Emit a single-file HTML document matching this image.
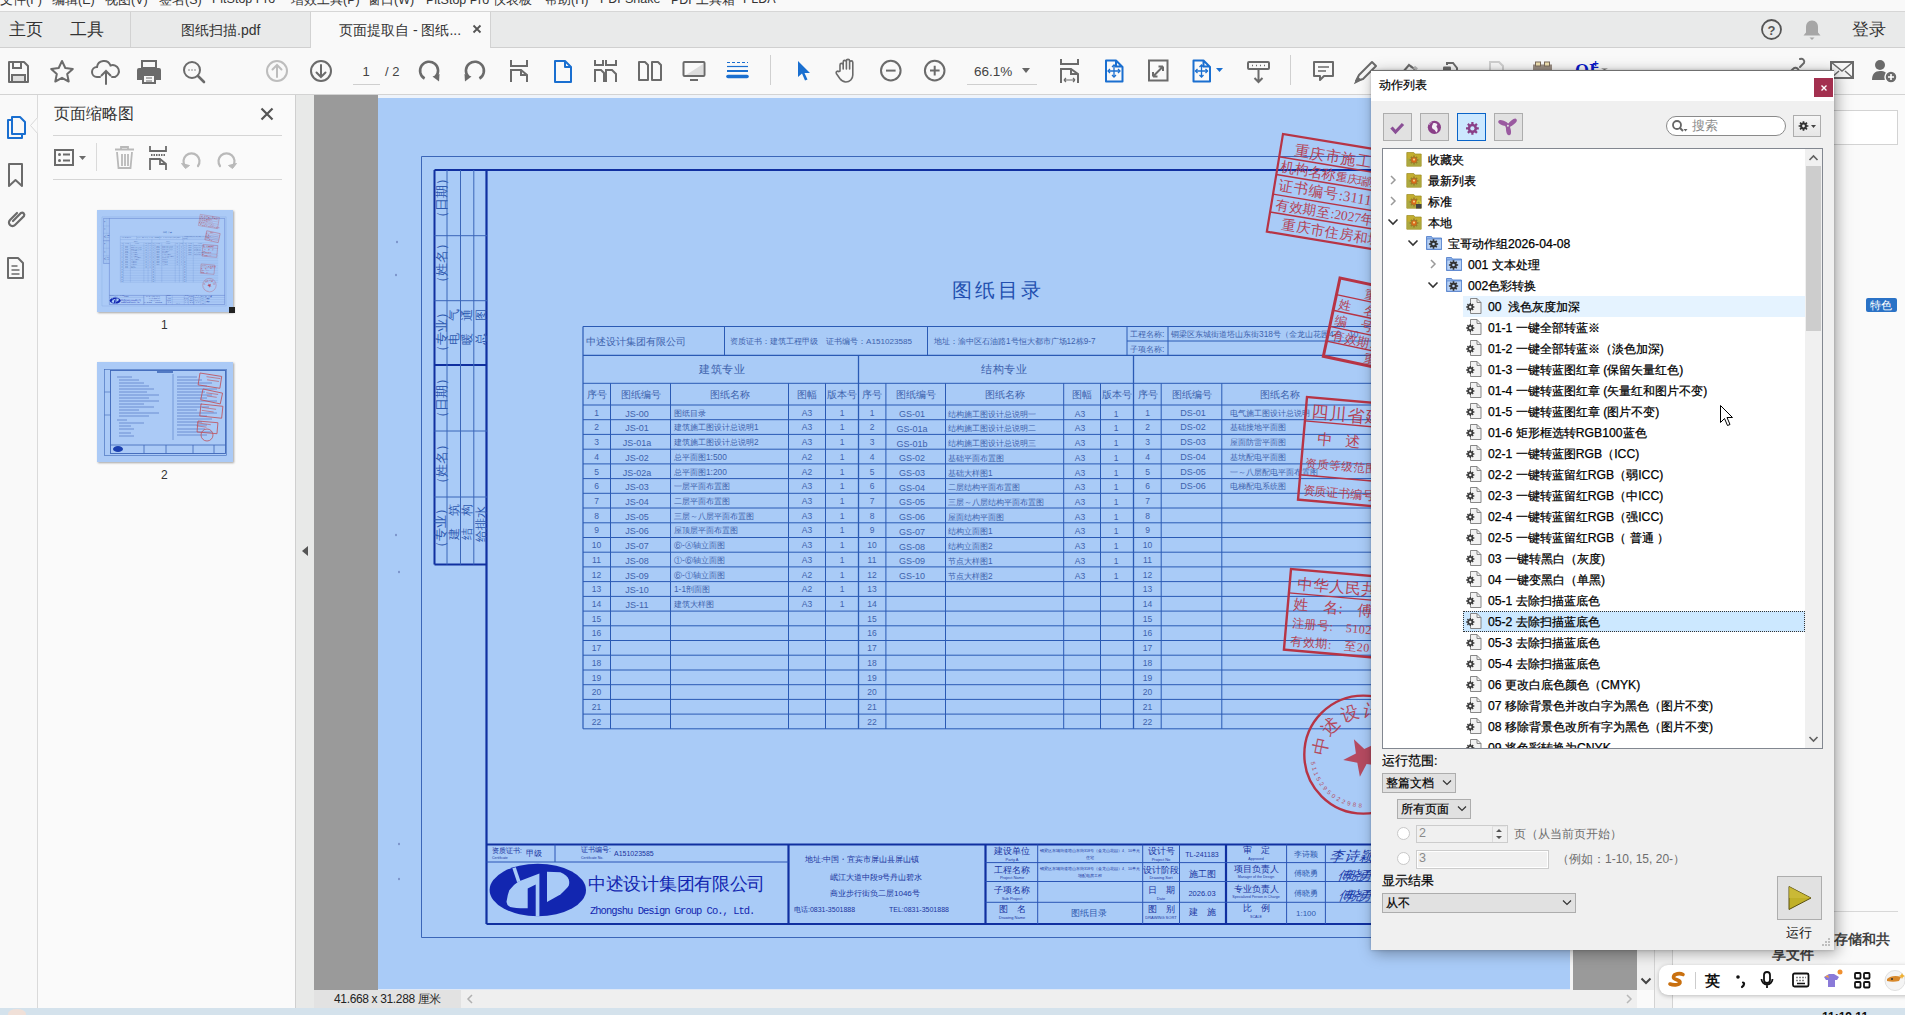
<!DOCTYPE html>
<html><head><meta charset="utf-8">
<style>
*{box-sizing:border-box}
html,body{margin:0;padding:0}
body{width:1905px;height:1015px;overflow:hidden;position:relative;background:#f9f9f9;font-family:"Liberation Sans",sans-serif;color:#222}
.a{position:absolute}
.t{position:absolute;white-space:nowrap}
</style></head><body>

<!-- MENU BAR -->
<div class="a" style="left:0;top:0;width:1905px;height:12px;background:#f9f9f9;border-bottom:1px solid #d6d6d6;overflow:hidden" id="menu"></div>

<!-- TAB BAR -->
<div class="a" style="left:0;top:12px;width:1905px;height:36px;background:#e9eaea;border-bottom:1px solid #d0d0d0" id="tabs"></div>

<!-- TOOLBAR -->
<div class="a" style="left:0;top:48px;width:1905px;height:47px;background:#f9f9f9;border-bottom:1px solid #d3d3d3" id="toolbar"></div>

<!-- LEFT ICON COLUMN -->
<div class="a" style="left:0;top:95px;width:38px;height:913px;background:#f9f9f9;border-right:1px solid #dadada" id="lefticons"></div>

<!-- THUMB PANEL -->
<div class="a" style="left:38px;top:95px;width:258px;height:913px;background:#fafafa;border-right:1px solid #cfcfcf" id="thumbs"></div>

<!-- SPLITTER -->
<div class="a" style="left:296px;top:95px;width:18px;height:913px;background:#e8e9e8" id="splitter"></div>

<!-- DOC AREA -->
<div class="a" style="left:314px;top:95px;width:1323px;height:895px;background:#9a9a9a" id="docarea"></div>

<!-- PAGE -->
<div class="a" style="left:378px;top:95px;width:1192px;height:895px;background:#a9cbf7;overflow:hidden" id="page"><div class="a" style="left:0;top:0;width:1192px;height:2.5px;background:#eef3fa"></div><div class="a" style="left:0;top:894px;width:1192px;height:1px;background:#dfe8f6"></div><div class="a" style="left:-378px;top:-95px;width:1905px;height:1015px"><svg class="a" style="left:0;top:0" width="1905" height="1015" font-family="Liberation Sans"><g id="bpg"><line x1="421.5" y1="156.5" x2="1510" y2="156.5" stroke="#3b66b8" stroke-width="1"/><line x1="1510" y1="156.5" x2="1510" y2="937.5" stroke="#3b66b8" stroke-width="1"/><line x1="421.5" y1="156.5" x2="421.5" y2="937.5" stroke="#3b66b8" stroke-width="1"/><line x1="421.5" y1="937.5" x2="1510" y2="937.5" stroke="#3b66b8" stroke-width="1"/><line x1="486.5" y1="170" x2="1497" y2="170" stroke="#1030a0" stroke-width="2.2"/><line x1="1497" y1="170" x2="1497" y2="924" stroke="#1030a0" stroke-width="2.2"/><line x1="486.5" y1="170" x2="486.5" y2="924" stroke="#1030a0" stroke-width="2.2"/><line x1="486.5" y1="924" x2="1497" y2="924" stroke="#1030a0" stroke-width="2.2"/><line x1="434.5" y1="170" x2="434.5" y2="564.5" stroke="#1030a0" stroke-width="2"/><line x1="434.5" y1="170" x2="487" y2="170" stroke="#1030a0" stroke-width="2"/><line x1="434.5" y1="564.5" x2="487" y2="564.5" stroke="#1030a0" stroke-width="2"/><line x1="434.5" y1="365" x2="487" y2="365" stroke="#1030a0" stroke-width="2"/><line x1="447" y1="170" x2="447" y2="564.5" stroke="#3b66b8" stroke-width="1"/><line x1="460.5" y1="170" x2="460.5" y2="564.5" stroke="#3b66b8" stroke-width="1"/><line x1="473.8" y1="170" x2="473.8" y2="564.5" stroke="#3b66b8" stroke-width="1"/><line x1="434.5" y1="235.7" x2="487" y2="235.7" stroke="#3b66b8" stroke-width="1"/><line x1="434.5" y1="300.7" x2="487" y2="300.7" stroke="#3b66b8" stroke-width="1"/><line x1="434.5" y1="431" x2="487" y2="431" stroke="#3b66b8" stroke-width="1"/><line x1="434.5" y1="497" x2="487" y2="497" stroke="#3b66b8" stroke-width="1"/><text x="441.5" y="198" font-size="12.5" text-anchor="middle" fill="#2f5ab0" transform="rotate(-90 441.5 198)" dominant-baseline="central" font-family="Liberation Serif">（日期）</text><text x="441.5" y="263" font-size="12.5" text-anchor="middle" fill="#2f5ab0" transform="rotate(-90 441.5 263)" dominant-baseline="central" font-family="Liberation Serif">（姓名）</text><text x="441.5" y="332" font-size="12.5" text-anchor="middle" fill="#2f5ab0" transform="rotate(-90 441.5 332)" dominant-baseline="central" font-family="Liberation Serif">（专业）</text><text x="441.5" y="398" font-size="12.5" text-anchor="middle" fill="#2f5ab0" transform="rotate(-90 441.5 398)" dominant-baseline="central" font-family="Liberation Serif">（日期）</text><text x="441.5" y="464" font-size="12.5" text-anchor="middle" fill="#2f5ab0" transform="rotate(-90 441.5 464)" dominant-baseline="central" font-family="Liberation Serif">（姓名）</text><text x="440.5" y="528" font-size="12.5" text-anchor="middle" fill="#2f5ab0" transform="rotate(-90 440.5 528)" dominant-baseline="central" font-family="Liberation Serif">（专业）</text><text x="454" y="327" font-size="11.5" text-anchor="middle" fill="#2f5ab0" transform="rotate(-90 454 327)" dominant-baseline="central" font-family="Liberation Serif">电　气</text><text x="467" y="327" font-size="11.5" text-anchor="middle" fill="#2f5ab0" transform="rotate(-90 467 327)" dominant-baseline="central" font-family="Liberation Serif">暖　通</text><text x="480.5" y="327" font-size="11.5" text-anchor="middle" fill="#2f5ab0" transform="rotate(-90 480.5 327)" dominant-baseline="central" font-family="Liberation Serif">总　图</text><text x="454" y="522" font-size="11.5" text-anchor="middle" fill="#2f5ab0" transform="rotate(-90 454 522)" dominant-baseline="central" font-family="Liberation Serif">建　筑</text><text x="467" y="522" font-size="11.5" text-anchor="middle" fill="#2f5ab0" transform="rotate(-90 467 522)" dominant-baseline="central" font-family="Liberation Serif">结　构</text><text x="480.5" y="524" font-size="11.5" text-anchor="middle" fill="#2f5ab0" transform="rotate(-90 480.5 524)" dominant-baseline="central" font-family="Liberation Serif">给排水</text><text x="998" y="297" font-size="20" text-anchor="middle" fill="#2350b0" letter-spacing="3" font-family="Liberation Serif">图纸目录</text><line x1="583" y1="326.5" x2="1440" y2="326.5" stroke="#2a5ab4" stroke-width="1.2"/><line x1="583" y1="355.3" x2="1440" y2="355.3" stroke="#2a5ab4" stroke-width="1.2"/><line x1="583" y1="383.3" x2="1440" y2="383.3" stroke="#2a5ab4" stroke-width="1"/><line x1="583" y1="405.0" x2="1440" y2="405.0" stroke="#2a5ab4" stroke-width="1.2"/><line x1="583" y1="419.7" x2="1440" y2="419.7" stroke="#2a5ab4" stroke-width="1"/><line x1="583" y1="434.4" x2="1440" y2="434.4" stroke="#2a5ab4" stroke-width="1"/><line x1="583" y1="449.2" x2="1440" y2="449.2" stroke="#2a5ab4" stroke-width="1"/><line x1="583" y1="463.9" x2="1440" y2="463.9" stroke="#2a5ab4" stroke-width="1"/><line x1="583" y1="478.6" x2="1440" y2="478.6" stroke="#2a5ab4" stroke-width="1"/><line x1="583" y1="493.3" x2="1440" y2="493.3" stroke="#2a5ab4" stroke-width="1"/><line x1="583" y1="508.0" x2="1440" y2="508.0" stroke="#2a5ab4" stroke-width="1"/><line x1="583" y1="522.8" x2="1440" y2="522.8" stroke="#2a5ab4" stroke-width="1"/><line x1="583" y1="537.5" x2="1440" y2="537.5" stroke="#2a5ab4" stroke-width="1"/><line x1="583" y1="552.2" x2="1440" y2="552.2" stroke="#2a5ab4" stroke-width="1"/><line x1="583" y1="566.9" x2="1440" y2="566.9" stroke="#2a5ab4" stroke-width="1"/><line x1="583" y1="581.6" x2="1440" y2="581.6" stroke="#2a5ab4" stroke-width="1"/><line x1="583" y1="596.4" x2="1440" y2="596.4" stroke="#2a5ab4" stroke-width="1"/><line x1="583" y1="611.1" x2="1440" y2="611.1" stroke="#2a5ab4" stroke-width="1"/><line x1="583" y1="625.8" x2="1440" y2="625.8" stroke="#2a5ab4" stroke-width="1"/><line x1="583" y1="640.5" x2="1440" y2="640.5" stroke="#2a5ab4" stroke-width="1"/><line x1="583" y1="655.2" x2="1440" y2="655.2" stroke="#2a5ab4" stroke-width="1"/><line x1="583" y1="670.0" x2="1440" y2="670.0" stroke="#2a5ab4" stroke-width="1"/><line x1="583" y1="684.7" x2="1440" y2="684.7" stroke="#2a5ab4" stroke-width="1"/><line x1="583" y1="699.4" x2="1440" y2="699.4" stroke="#2a5ab4" stroke-width="1"/><line x1="583" y1="714.1" x2="1440" y2="714.1" stroke="#2a5ab4" stroke-width="1"/><line x1="583" y1="728.8" x2="1440" y2="728.8" stroke="#2a5ab4" stroke-width="1"/><line x1="583" y1="326.5" x2="583" y2="728.84" stroke="#2a5ab4" stroke-width="1.2"/><line x1="724.5" y1="326.5" x2="724.5" y2="355.3" stroke="#2a5ab4" stroke-width="1"/><line x1="927.5" y1="326.5" x2="927.5" y2="355.3" stroke="#2a5ab4" stroke-width="1"/><line x1="1127" y1="326.5" x2="1127" y2="355.3" stroke="#2a5ab4" stroke-width="1"/><line x1="1168" y1="326.5" x2="1168" y2="355.3" stroke="#2a5ab4" stroke-width="1"/><line x1="1127" y1="341" x2="1440" y2="341" stroke="#2a5ab4" stroke-width="1"/><line x1="858.5" y1="355.3" x2="858.5" y2="728.84" stroke="#2a5ab4" stroke-width="1.3"/><line x1="1133.5" y1="355.3" x2="1133.5" y2="728.84" stroke="#2a5ab4" stroke-width="1.3"/><line x1="610.5" y1="383.3" x2="610.5" y2="728.84" stroke="#2a5ab4" stroke-width="1"/><line x1="670.5" y1="383.3" x2="670.5" y2="728.84" stroke="#2a5ab4" stroke-width="1"/><line x1="788.5" y1="383.3" x2="788.5" y2="728.84" stroke="#2a5ab4" stroke-width="1"/><line x1="825.5" y1="383.3" x2="825.5" y2="728.84" stroke="#2a5ab4" stroke-width="1"/><line x1="885.9" y1="383.3" x2="885.9" y2="728.84" stroke="#2a5ab4" stroke-width="1"/><line x1="945.5" y1="383.3" x2="945.5" y2="728.84" stroke="#2a5ab4" stroke-width="1"/><line x1="1063.7" y1="383.3" x2="1063.7" y2="728.84" stroke="#2a5ab4" stroke-width="1"/><line x1="1100.5" y1="383.3" x2="1100.5" y2="728.84" stroke="#2a5ab4" stroke-width="1"/><line x1="1161.2" y1="383.3" x2="1161.2" y2="728.84" stroke="#2a5ab4" stroke-width="1"/><line x1="1221.8" y1="383.3" x2="1221.8" y2="728.84" stroke="#2a5ab4" stroke-width="1"/><text x="586" y="345" font-size="10.2" text-anchor="start" fill="#3d62ad" letter-spacing="0">中述设计集团有限公司</text><text x="730" y="344" font-size="8.1" text-anchor="start" fill="#3d62ad" >资质证书：建筑工程甲级　证书编号：A151023585</text><text x="934" y="344" font-size="8.2" text-anchor="start" fill="#3d62ad" >地址：渝中区石油路1号恒大都市广场12栋9-7</text><text x="1130" y="337" font-size="8.4" text-anchor="start" fill="#3d62ad" >工程名称:</text><text x="1130" y="352" font-size="8.4" text-anchor="start" fill="#3d62ad" >子项名称:</text><text x="1171" y="337" font-size="8.4" text-anchor="start" fill="#3d62ad" >铜梁区东城街道塔山东街318号（金龙山花园4-9、10</text><text x="722" y="373" font-size="10.8" text-anchor="middle" fill="#3d62ad" letter-spacing="0.5">建筑专业</text><text x="1004" y="373" font-size="10.8" text-anchor="middle" fill="#3d62ad" letter-spacing="0.5">结构专业</text><text x="596.5" y="397.5" font-size="10" text-anchor="middle" fill="#3d62ad" >序号</text><text x="640.5" y="397.5" font-size="10" text-anchor="middle" fill="#3d62ad" >图纸编号</text><text x="729.5" y="397.5" font-size="10" text-anchor="middle" fill="#3d62ad" >图纸名称</text><text x="807" y="397.5" font-size="10" text-anchor="middle" fill="#3d62ad" >图幅</text><text x="842" y="397.5" font-size="10" text-anchor="middle" fill="#3d62ad" >版本号</text><text x="872" y="397.5" font-size="10" text-anchor="middle" fill="#3d62ad" >序号</text><text x="916" y="397.5" font-size="10" text-anchor="middle" fill="#3d62ad" >图纸编号</text><text x="1004.5" y="397.5" font-size="10" text-anchor="middle" fill="#3d62ad" >图纸名称</text><text x="1082" y="397.5" font-size="10" text-anchor="middle" fill="#3d62ad" >图幅</text><text x="1117" y="397.5" font-size="10" text-anchor="middle" fill="#3d62ad" >版本号</text><text x="1147.5" y="397.5" font-size="10" text-anchor="middle" fill="#3d62ad" >序号</text><text x="1191.5" y="397.5" font-size="10" text-anchor="middle" fill="#3d62ad" >图纸编号</text><text x="1280" y="397.5" font-size="10" text-anchor="middle" fill="#3d62ad" >图纸名称</text><text x="596.5" y="415.6" font-size="8.5" text-anchor="middle" fill="#3d62ad" >1</text><text x="872" y="415.6" font-size="8.5" text-anchor="middle" fill="#3d62ad" >1</text><text x="1147.5" y="415.6" font-size="8.5" text-anchor="middle" fill="#3d62ad" >1</text><text x="637" y="416.6" font-size="9" text-anchor="middle" fill="#3d62ad" >JS-00</text><text x="674" y="415.6" font-size="8.3" text-anchor="start" fill="#3d62ad" >图纸目录</text><text x="807" y="415.6" font-size="8.5" text-anchor="middle" fill="#3d62ad" >A3</text><text x="842" y="415.6" font-size="8.5" text-anchor="middle" fill="#3d62ad" >1</text><text x="912" y="417.1" font-size="9" text-anchor="middle" fill="#3d62ad" >GS-01</text><text x="948" y="416.6" font-size="8.3" text-anchor="start" fill="#3d62ad" >结构施工图设计总说明一</text><text x="1080" y="416.6" font-size="8.5" text-anchor="middle" fill="#3d62ad" >A3</text><text x="1116" y="416.6" font-size="8.5" text-anchor="middle" fill="#3d62ad" >1</text><text x="1193" y="415.6" font-size="9" text-anchor="middle" fill="#3d62ad" >DS-01</text><text x="1230" y="415.6" font-size="8.3" text-anchor="start" fill="#3d62ad" >电气施工图设计总说明</text><text x="596.5" y="430.3" font-size="8.5" text-anchor="middle" fill="#3d62ad" >2</text><text x="872" y="430.3" font-size="8.5" text-anchor="middle" fill="#3d62ad" >2</text><text x="1147.5" y="430.3" font-size="8.5" text-anchor="middle" fill="#3d62ad" >2</text><text x="637" y="431.3" font-size="9" text-anchor="middle" fill="#3d62ad" >JS-01</text><text x="674" y="430.3" font-size="8.3" text-anchor="start" fill="#3d62ad" >建筑施工图设计总说明1</text><text x="807" y="430.3" font-size="8.5" text-anchor="middle" fill="#3d62ad" >A3</text><text x="842" y="430.3" font-size="8.5" text-anchor="middle" fill="#3d62ad" >1</text><text x="912" y="431.8" font-size="9" text-anchor="middle" fill="#3d62ad" >GS-01a</text><text x="948" y="431.3" font-size="8.3" text-anchor="start" fill="#3d62ad" >结构施工图设计总说明二</text><text x="1080" y="431.3" font-size="8.5" text-anchor="middle" fill="#3d62ad" >A3</text><text x="1116" y="431.3" font-size="8.5" text-anchor="middle" fill="#3d62ad" >1</text><text x="1193" y="430.3" font-size="9" text-anchor="middle" fill="#3d62ad" >DS-02</text><text x="1230" y="430.3" font-size="8.3" text-anchor="start" fill="#3d62ad" >基础接地平面图</text><text x="596.5" y="445.0" font-size="8.5" text-anchor="middle" fill="#3d62ad" >3</text><text x="872" y="445.0" font-size="8.5" text-anchor="middle" fill="#3d62ad" >3</text><text x="1147.5" y="445.0" font-size="8.5" text-anchor="middle" fill="#3d62ad" >3</text><text x="637" y="446.0" font-size="9" text-anchor="middle" fill="#3d62ad" >JS-01a</text><text x="674" y="445.0" font-size="8.3" text-anchor="start" fill="#3d62ad" >建筑施工图设计总说明2</text><text x="807" y="445.0" font-size="8.5" text-anchor="middle" fill="#3d62ad" >A3</text><text x="842" y="445.0" font-size="8.5" text-anchor="middle" fill="#3d62ad" >1</text><text x="912" y="446.5" font-size="9" text-anchor="middle" fill="#3d62ad" >GS-01b</text><text x="948" y="446.0" font-size="8.3" text-anchor="start" fill="#3d62ad" >结构施工图设计总说明三</text><text x="1080" y="446.0" font-size="8.5" text-anchor="middle" fill="#3d62ad" >A3</text><text x="1116" y="446.0" font-size="8.5" text-anchor="middle" fill="#3d62ad" >1</text><text x="1193" y="445.0" font-size="9" text-anchor="middle" fill="#3d62ad" >DS-03</text><text x="1230" y="445.0" font-size="8.3" text-anchor="start" fill="#3d62ad" >屋面防雷平面图</text><text x="596.5" y="459.8" font-size="8.5" text-anchor="middle" fill="#3d62ad" >4</text><text x="872" y="459.8" font-size="8.5" text-anchor="middle" fill="#3d62ad" >4</text><text x="1147.5" y="459.8" font-size="8.5" text-anchor="middle" fill="#3d62ad" >4</text><text x="637" y="460.8" font-size="9" text-anchor="middle" fill="#3d62ad" >JS-02</text><text x="674" y="459.8" font-size="8.3" text-anchor="start" fill="#3d62ad" >总平面图1:500</text><text x="807" y="459.8" font-size="8.5" text-anchor="middle" fill="#3d62ad" >A2</text><text x="842" y="459.8" font-size="8.5" text-anchor="middle" fill="#3d62ad" >1</text><text x="912" y="461.3" font-size="9" text-anchor="middle" fill="#3d62ad" >GS-02</text><text x="948" y="460.8" font-size="8.3" text-anchor="start" fill="#3d62ad" >基础平面布置图</text><text x="1080" y="460.8" font-size="8.5" text-anchor="middle" fill="#3d62ad" >A3</text><text x="1116" y="460.8" font-size="8.5" text-anchor="middle" fill="#3d62ad" >1</text><text x="1193" y="459.8" font-size="9" text-anchor="middle" fill="#3d62ad" >DS-04</text><text x="1230" y="459.8" font-size="8.3" text-anchor="start" fill="#3d62ad" >基坑配电平面图</text><text x="596.5" y="474.5" font-size="8.5" text-anchor="middle" fill="#3d62ad" >5</text><text x="872" y="474.5" font-size="8.5" text-anchor="middle" fill="#3d62ad" >5</text><text x="1147.5" y="474.5" font-size="8.5" text-anchor="middle" fill="#3d62ad" >5</text><text x="637" y="475.5" font-size="9" text-anchor="middle" fill="#3d62ad" >JS-02a</text><text x="674" y="474.5" font-size="8.3" text-anchor="start" fill="#3d62ad" >总平面图1:200</text><text x="807" y="474.5" font-size="8.5" text-anchor="middle" fill="#3d62ad" >A2</text><text x="842" y="474.5" font-size="8.5" text-anchor="middle" fill="#3d62ad" >1</text><text x="912" y="476.0" font-size="9" text-anchor="middle" fill="#3d62ad" >GS-03</text><text x="948" y="475.5" font-size="8.3" text-anchor="start" fill="#3d62ad" >基础大样图1</text><text x="1080" y="475.5" font-size="8.5" text-anchor="middle" fill="#3d62ad" >A3</text><text x="1116" y="475.5" font-size="8.5" text-anchor="middle" fill="#3d62ad" >1</text><text x="1193" y="474.5" font-size="9" text-anchor="middle" fill="#3d62ad" >DS-05</text><text x="1230" y="474.5" font-size="8.3" text-anchor="start" fill="#3d62ad" >一～八层配电平面布置图</text><text x="596.5" y="489.2" font-size="8.5" text-anchor="middle" fill="#3d62ad" >6</text><text x="872" y="489.2" font-size="8.5" text-anchor="middle" fill="#3d62ad" >6</text><text x="1147.5" y="489.2" font-size="8.5" text-anchor="middle" fill="#3d62ad" >6</text><text x="637" y="490.2" font-size="9" text-anchor="middle" fill="#3d62ad" >JS-03</text><text x="674" y="489.2" font-size="8.3" text-anchor="start" fill="#3d62ad" >一层平面布置图</text><text x="807" y="489.2" font-size="8.5" text-anchor="middle" fill="#3d62ad" >A3</text><text x="842" y="489.2" font-size="8.5" text-anchor="middle" fill="#3d62ad" >1</text><text x="912" y="490.7" font-size="9" text-anchor="middle" fill="#3d62ad" >GS-04</text><text x="948" y="490.2" font-size="8.3" text-anchor="start" fill="#3d62ad" >二层结构平面布置图</text><text x="1080" y="490.2" font-size="8.5" text-anchor="middle" fill="#3d62ad" >A3</text><text x="1116" y="490.2" font-size="8.5" text-anchor="middle" fill="#3d62ad" >1</text><text x="1193" y="489.2" font-size="9" text-anchor="middle" fill="#3d62ad" >DS-06</text><text x="1230" y="489.2" font-size="8.3" text-anchor="start" fill="#3d62ad" >电梯配电系统图</text><text x="596.5" y="503.9" font-size="8.5" text-anchor="middle" fill="#3d62ad" >7</text><text x="872" y="503.9" font-size="8.5" text-anchor="middle" fill="#3d62ad" >7</text><text x="1147.5" y="503.9" font-size="8.5" text-anchor="middle" fill="#3d62ad" >7</text><text x="637" y="504.9" font-size="9" text-anchor="middle" fill="#3d62ad" >JS-04</text><text x="674" y="503.9" font-size="8.3" text-anchor="start" fill="#3d62ad" >二层平面布置图</text><text x="807" y="503.9" font-size="8.5" text-anchor="middle" fill="#3d62ad" >A3</text><text x="842" y="503.9" font-size="8.5" text-anchor="middle" fill="#3d62ad" >1</text><text x="912" y="505.4" font-size="9" text-anchor="middle" fill="#3d62ad" >GS-05</text><text x="948" y="504.9" font-size="8.3" text-anchor="start" fill="#3d62ad" >三层～八层结构平面布置图</text><text x="1080" y="504.9" font-size="8.5" text-anchor="middle" fill="#3d62ad" >A3</text><text x="1116" y="504.9" font-size="8.5" text-anchor="middle" fill="#3d62ad" >1</text><text x="596.5" y="518.6" font-size="8.5" text-anchor="middle" fill="#3d62ad" >8</text><text x="872" y="518.6" font-size="8.5" text-anchor="middle" fill="#3d62ad" >8</text><text x="1147.5" y="518.6" font-size="8.5" text-anchor="middle" fill="#3d62ad" >8</text><text x="637" y="519.6" font-size="9" text-anchor="middle" fill="#3d62ad" >JS-05</text><text x="674" y="518.6" font-size="8.3" text-anchor="start" fill="#3d62ad" >三层～八层平面布置图</text><text x="807" y="518.6" font-size="8.5" text-anchor="middle" fill="#3d62ad" >A3</text><text x="842" y="518.6" font-size="8.5" text-anchor="middle" fill="#3d62ad" >1</text><text x="912" y="520.1" font-size="9" text-anchor="middle" fill="#3d62ad" >GS-06</text><text x="948" y="519.6" font-size="8.3" text-anchor="start" fill="#3d62ad" >屋面结构平面图</text><text x="1080" y="519.6" font-size="8.5" text-anchor="middle" fill="#3d62ad" >A3</text><text x="1116" y="519.6" font-size="8.5" text-anchor="middle" fill="#3d62ad" >1</text><text x="596.5" y="533.4" font-size="8.5" text-anchor="middle" fill="#3d62ad" >9</text><text x="872" y="533.4" font-size="8.5" text-anchor="middle" fill="#3d62ad" >9</text><text x="1147.5" y="533.4" font-size="8.5" text-anchor="middle" fill="#3d62ad" >9</text><text x="637" y="534.4" font-size="9" text-anchor="middle" fill="#3d62ad" >JS-06</text><text x="674" y="533.4" font-size="8.3" text-anchor="start" fill="#3d62ad" >屋顶层平面布置图</text><text x="807" y="533.4" font-size="8.5" text-anchor="middle" fill="#3d62ad" >A3</text><text x="842" y="533.4" font-size="8.5" text-anchor="middle" fill="#3d62ad" >1</text><text x="912" y="534.9" font-size="9" text-anchor="middle" fill="#3d62ad" >GS-07</text><text x="948" y="534.4" font-size="8.3" text-anchor="start" fill="#3d62ad" >结构立面图1</text><text x="1080" y="534.4" font-size="8.5" text-anchor="middle" fill="#3d62ad" >A3</text><text x="1116" y="534.4" font-size="8.5" text-anchor="middle" fill="#3d62ad" >1</text><text x="596.5" y="548.1" font-size="8.5" text-anchor="middle" fill="#3d62ad" >10</text><text x="872" y="548.1" font-size="8.5" text-anchor="middle" fill="#3d62ad" >10</text><text x="1147.5" y="548.1" font-size="8.5" text-anchor="middle" fill="#3d62ad" >10</text><text x="637" y="549.1" font-size="9" text-anchor="middle" fill="#3d62ad" >JS-07</text><text x="674" y="548.1" font-size="8.3" text-anchor="start" fill="#3d62ad" >⑥-Ⓐ轴立面图</text><text x="807" y="548.1" font-size="8.5" text-anchor="middle" fill="#3d62ad" >A3</text><text x="842" y="548.1" font-size="8.5" text-anchor="middle" fill="#3d62ad" >1</text><text x="912" y="549.6" font-size="9" text-anchor="middle" fill="#3d62ad" >GS-08</text><text x="948" y="549.1" font-size="8.3" text-anchor="start" fill="#3d62ad" >结构立面图2</text><text x="1080" y="549.1" font-size="8.5" text-anchor="middle" fill="#3d62ad" >A3</text><text x="1116" y="549.1" font-size="8.5" text-anchor="middle" fill="#3d62ad" >1</text><text x="596.5" y="562.8" font-size="8.5" text-anchor="middle" fill="#3d62ad" >11</text><text x="872" y="562.8" font-size="8.5" text-anchor="middle" fill="#3d62ad" >11</text><text x="1147.5" y="562.8" font-size="8.5" text-anchor="middle" fill="#3d62ad" >11</text><text x="637" y="563.8" font-size="9" text-anchor="middle" fill="#3d62ad" >JS-08</text><text x="674" y="562.8" font-size="8.3" text-anchor="start" fill="#3d62ad" >①-⑥轴立面图</text><text x="807" y="562.8" font-size="8.5" text-anchor="middle" fill="#3d62ad" >A3</text><text x="842" y="562.8" font-size="8.5" text-anchor="middle" fill="#3d62ad" >1</text><text x="912" y="564.3" font-size="9" text-anchor="middle" fill="#3d62ad" >GS-09</text><text x="948" y="563.8" font-size="8.3" text-anchor="start" fill="#3d62ad" >节点大样图1</text><text x="1080" y="563.8" font-size="8.5" text-anchor="middle" fill="#3d62ad" >A3</text><text x="1116" y="563.8" font-size="8.5" text-anchor="middle" fill="#3d62ad" >1</text><text x="596.5" y="577.5" font-size="8.5" text-anchor="middle" fill="#3d62ad" >12</text><text x="872" y="577.5" font-size="8.5" text-anchor="middle" fill="#3d62ad" >12</text><text x="1147.5" y="577.5" font-size="8.5" text-anchor="middle" fill="#3d62ad" >12</text><text x="637" y="578.5" font-size="9" text-anchor="middle" fill="#3d62ad" >JS-09</text><text x="674" y="577.5" font-size="8.3" text-anchor="start" fill="#3d62ad" >⑥-①轴立面图</text><text x="807" y="577.5" font-size="8.5" text-anchor="middle" fill="#3d62ad" >A2</text><text x="842" y="577.5" font-size="8.5" text-anchor="middle" fill="#3d62ad" >1</text><text x="912" y="579.0" font-size="9" text-anchor="middle" fill="#3d62ad" >GS-10</text><text x="948" y="578.5" font-size="8.3" text-anchor="start" fill="#3d62ad" >节点大样图2</text><text x="1080" y="578.5" font-size="8.5" text-anchor="middle" fill="#3d62ad" >A3</text><text x="1116" y="578.5" font-size="8.5" text-anchor="middle" fill="#3d62ad" >1</text><text x="596.5" y="592.2" font-size="8.5" text-anchor="middle" fill="#3d62ad" >13</text><text x="872" y="592.2" font-size="8.5" text-anchor="middle" fill="#3d62ad" >13</text><text x="1147.5" y="592.2" font-size="8.5" text-anchor="middle" fill="#3d62ad" >13</text><text x="637" y="593.2" font-size="9" text-anchor="middle" fill="#3d62ad" >JS-10</text><text x="674" y="592.2" font-size="8.3" text-anchor="start" fill="#3d62ad" >1-1剖面图</text><text x="807" y="592.2" font-size="8.5" text-anchor="middle" fill="#3d62ad" >A2</text><text x="842" y="592.2" font-size="8.5" text-anchor="middle" fill="#3d62ad" >1</text><text x="596.5" y="607.0" font-size="8.5" text-anchor="middle" fill="#3d62ad" >14</text><text x="872" y="607.0" font-size="8.5" text-anchor="middle" fill="#3d62ad" >14</text><text x="1147.5" y="607.0" font-size="8.5" text-anchor="middle" fill="#3d62ad" >14</text><text x="637" y="608.0" font-size="9" text-anchor="middle" fill="#3d62ad" >JS-11</text><text x="674" y="607.0" font-size="8.3" text-anchor="start" fill="#3d62ad" >建筑大样图</text><text x="807" y="607.0" font-size="8.5" text-anchor="middle" fill="#3d62ad" >A3</text><text x="842" y="607.0" font-size="8.5" text-anchor="middle" fill="#3d62ad" >1</text><text x="596.5" y="621.7" font-size="8.5" text-anchor="middle" fill="#3d62ad" >15</text><text x="872" y="621.7" font-size="8.5" text-anchor="middle" fill="#3d62ad" >15</text><text x="1147.5" y="621.7" font-size="8.5" text-anchor="middle" fill="#3d62ad" >15</text><text x="596.5" y="636.4" font-size="8.5" text-anchor="middle" fill="#3d62ad" >16</text><text x="872" y="636.4" font-size="8.5" text-anchor="middle" fill="#3d62ad" >16</text><text x="1147.5" y="636.4" font-size="8.5" text-anchor="middle" fill="#3d62ad" >16</text><text x="596.5" y="651.1" font-size="8.5" text-anchor="middle" fill="#3d62ad" >17</text><text x="872" y="651.1" font-size="8.5" text-anchor="middle" fill="#3d62ad" >17</text><text x="1147.5" y="651.1" font-size="8.5" text-anchor="middle" fill="#3d62ad" >17</text><text x="596.5" y="665.8" font-size="8.5" text-anchor="middle" fill="#3d62ad" >18</text><text x="872" y="665.8" font-size="8.5" text-anchor="middle" fill="#3d62ad" >18</text><text x="1147.5" y="665.8" font-size="8.5" text-anchor="middle" fill="#3d62ad" >18</text><text x="596.5" y="680.6" font-size="8.5" text-anchor="middle" fill="#3d62ad" >19</text><text x="872" y="680.6" font-size="8.5" text-anchor="middle" fill="#3d62ad" >19</text><text x="1147.5" y="680.6" font-size="8.5" text-anchor="middle" fill="#3d62ad" >19</text><text x="596.5" y="695.3" font-size="8.5" text-anchor="middle" fill="#3d62ad" >20</text><text x="872" y="695.3" font-size="8.5" text-anchor="middle" fill="#3d62ad" >20</text><text x="1147.5" y="695.3" font-size="8.5" text-anchor="middle" fill="#3d62ad" >20</text><text x="596.5" y="710.0" font-size="8.5" text-anchor="middle" fill="#3d62ad" >21</text><text x="872" y="710.0" font-size="8.5" text-anchor="middle" fill="#3d62ad" >21</text><text x="1147.5" y="710.0" font-size="8.5" text-anchor="middle" fill="#3d62ad" >21</text><text x="596.5" y="724.7" font-size="8.5" text-anchor="middle" fill="#3d62ad" >22</text><text x="872" y="724.7" font-size="8.5" text-anchor="middle" fill="#3d62ad" >22</text><text x="1147.5" y="724.7" font-size="8.5" text-anchor="middle" fill="#3d62ad" >22</text><line x1="486.5" y1="844.5" x2="1497" y2="844.5" stroke="#1030a0" stroke-width="2.2"/><line x1="788.5" y1="844.5" x2="788.5" y2="924" stroke="#1030a0" stroke-width="2.2"/><line x1="985.5" y1="844.5" x2="985.5" y2="924" stroke="#1030a0" stroke-width="2.2"/><line x1="1226" y1="844.5" x2="1226" y2="924" stroke="#1030a0" stroke-width="2.2"/><line x1="486.5" y1="862" x2="788.5" y2="862" stroke="#2a55b5" stroke-width="1"/><line x1="555" y1="844.5" x2="555" y2="862" stroke="#2a55b5" stroke-width="1"/><line x1="985.5" y1="862.6" x2="1497" y2="862.6" stroke="#2a55b5" stroke-width="1"/><line x1="985.5" y1="881.5" x2="1497" y2="881.5" stroke="#2a55b5" stroke-width="1"/><line x1="985.5" y1="902.3" x2="1497" y2="902.3" stroke="#2a55b5" stroke-width="1"/><line x1="1037.7" y1="844.5" x2="1037.7" y2="924" stroke="#2a55b5" stroke-width="1"/><line x1="1142.7" y1="844.5" x2="1142.7" y2="924" stroke="#2a55b5" stroke-width="1"/><line x1="1179.5" y1="844.5" x2="1179.5" y2="924" stroke="#2a55b5" stroke-width="1"/><line x1="1286.6" y1="844.5" x2="1286.6" y2="924" stroke="#2a55b5" stroke-width="1"/><line x1="1325.4" y1="844.5" x2="1325.4" y2="924" stroke="#2a55b5" stroke-width="1"/><text x="492" y="853" font-size="6.5" text-anchor="start" fill="#1a34a0" >资质证书:</text><text x="492" y="859" font-size="3.5" text-anchor="start" fill="#1a34a0" >Certificate</text><text x="526" y="856" font-size="7.5" text-anchor="start" fill="#1a34a0" >甲级</text><text x="581" y="852" font-size="6.5" text-anchor="start" fill="#1a34a0" >证书编号:</text><text x="581" y="859" font-size="3.5" text-anchor="start" fill="#1a34a0" >Certificate No.</text><text x="614" y="856" font-size="7" text-anchor="start" fill="#1a34a0" >A151023585</text><ellipse cx="537.8" cy="890" rx="48.2" ry="26.2" fill="#1226b0"/><path d="M518.5 881.5L539.4 873.5V916.5H535.7V884.4L527.7 888.6V908.3Q516 908.5 510.1 907Q505.5 904 506.8 900.3Q507.5 895 509.3 890.3Q513 885 518.5 881.5Z" fill="#a9cbf7"/><path d="M512.4 868.2L515.8 867.3L520.4 881L517.1 882.2Z" fill="#a9cbf7"/><path d="M547 871.8L560.4 872.2Q567 875 568.8 879.4Q570 884 567.9 886.9Q564 891 560.4 894.4L547 902Z" fill="#a9cbf7"/><text x="588" y="890" font-size="17.5" text-anchor="start" fill="#1226b0" letter-spacing="-0.3">中述设计集团有限公司</text><text x="590" y="914" font-size="10.5" text-anchor="start" fill="#1226b0" font-family="Liberation Mono" letter-spacing="-1">Zhongshu Design Group Co., Ltd.</text><text x="805" y="862" font-size="8" text-anchor="start" fill="#1a34a0" >地址:中国・宜宾市屏山县屏山镇</text><text x="830" y="880" font-size="8" text-anchor="start" fill="#1a34a0" >岷江大道中段9号丹山碧水</text><text x="830" y="896" font-size="8" text-anchor="start" fill="#1a34a0" >商业步行街负二层1046号</text><text x="794" y="912" font-size="7" text-anchor="start" fill="#1a34a0" >电话:0831-3501888</text><text x="889" y="912" font-size="7" text-anchor="start" fill="#1a34a0" >TEL:0831-3501888</text><text x="1012" y="854" font-size="8.5" text-anchor="middle" fill="#1a34a0" >建设单位</text><text x="1012" y="860.5" font-size="4" text-anchor="middle" fill="#1a34a0" >Party A</text><text x="1012" y="872.5" font-size="8.5" text-anchor="middle" fill="#1a34a0" >工程名称</text><text x="1012" y="879.0" font-size="4" text-anchor="middle" fill="#1a34a0" >Project Name</text><text x="1012" y="893" font-size="8.5" text-anchor="middle" fill="#1a34a0" >子项名称</text><text x="1012" y="899.5" font-size="4" text-anchor="middle" fill="#1a34a0" >Sub Project</text><text x="1012" y="912" font-size="8.5" text-anchor="middle" fill="#1a34a0" >图　名</text><text x="1012" y="918.5" font-size="4" text-anchor="middle" fill="#1a34a0" >Drawing Name</text><text x="1161" y="854" font-size="8.5" text-anchor="middle" fill="#1a34a0" >设计号</text><text x="1161" y="860.5" font-size="4" text-anchor="middle" fill="#1a34a0" >Project No</text><text x="1161" y="872.5" font-size="8.5" text-anchor="middle" fill="#1a34a0" >设计阶段</text><text x="1161" y="879.0" font-size="4" text-anchor="middle" fill="#1a34a0" >Drawing Sort</text><text x="1161" y="893" font-size="8.5" text-anchor="middle" fill="#1a34a0" >日　期</text><text x="1161" y="899.5" font-size="4" text-anchor="middle" fill="#1a34a0" >Date</text><text x="1161" y="912" font-size="8.5" text-anchor="middle" fill="#1a34a0" >图　别</text><text x="1161" y="918.5" font-size="4" text-anchor="middle" fill="#1a34a0" >DRAWING SORT</text><text x="1090" y="852" font-size="3.6" text-anchor="middle" fill="#1a34a0" >铜梁区东城街道塔山东街318号（金龙山花园）4、10单元</text><text x="1090" y="859" font-size="3.6" text-anchor="middle" fill="#1a34a0" >住宅</text><text x="1090" y="870" font-size="3.6" text-anchor="middle" fill="#1a34a0" >铜梁区东城街道塔山东街318号（金龙山花园）4、10单元</text><text x="1090" y="877" font-size="3.6" text-anchor="middle" fill="#1a34a0" >增配电房工程</text><text x="1089" y="916" font-size="8.5" text-anchor="middle" fill="#2f5ab0" >图纸目录</text><text x="1202" y="857" font-size="7" text-anchor="middle" fill="#1a34a0" >TL-241183</text><text x="1202" y="877" font-size="8.5" text-anchor="middle" fill="#1a34a0" >施工图</text><text x="1202" y="896" font-size="7.5" text-anchor="middle" fill="#1a34a0" >2026.03</text><text x="1202" y="915" font-size="8.5" text-anchor="middle" fill="#1a34a0" >建　施</text><text x="1256" y="853" font-size="8.5" text-anchor="middle" fill="#1a34a0" >审　定</text><text x="1256" y="859.5" font-size="3.6" text-anchor="middle" fill="#1a34a0" >Approved</text><text x="1256" y="871.5" font-size="8.5" text-anchor="middle" fill="#1a34a0" >项目负责人</text><text x="1256" y="878.0" font-size="3.6" text-anchor="middle" fill="#1a34a0" >Manager of the Design</text><text x="1256" y="891.5" font-size="8.5" text-anchor="middle" fill="#1a34a0" >专业负责人</text><text x="1256" y="898.0" font-size="3.6" text-anchor="middle" fill="#1a34a0" >Specialized Person in Charge</text><text x="1256" y="911" font-size="8.5" text-anchor="middle" fill="#1a34a0" >比　例</text><text x="1256" y="917.5" font-size="3.6" text-anchor="middle" fill="#1a34a0" >SCALE</text><text x="1306" y="857" font-size="7.5" text-anchor="middle" fill="#2f5ab0" >李诗颖</text><text x="1306" y="876" font-size="7.5" text-anchor="middle" fill="#2f5ab0" >傅晓勇</text><text x="1306" y="896" font-size="7.5" text-anchor="middle" fill="#2f5ab0" >傅晓勇</text><text x="1306" y="916" font-size="8" text-anchor="middle" fill="#2f5ab0" >1:100</text><g fill="#1a3aa8" font-family="Liberation Serif" font-style="italic" transform="skewX(-8)"><text x="1450" y="861" font-size="14" letter-spacing="1">李诗颖</text><text x="1461" y="880" font-size="13" letter-spacing="-2.5">傅晓勇</text><text x="1464" y="900" font-size="13" letter-spacing="-2.5">傅晓勇</text></g><ellipse cx="397" cy="242" rx="1" ry="1.3" fill="#7890c8"/><ellipse cx="396" cy="275" rx="1" ry="1.3" fill="#7890c8"/><ellipse cx="396" cy="535" rx="1" ry="1.3" fill="#7890c8"/><ellipse cx="399" cy="572" rx="1" ry="1.3" fill="#7890c8"/><ellipse cx="399" cy="844" rx="1" ry="1.3" fill="#7890c8"/><ellipse cx="399" cy="879" rx="1" ry="1.3" fill="#7890c8"/><g transform="translate(1283 134) rotate(9.4)" font-family="Liberation Serif" fill="#b73445"><rect x="0" y="0" width="170" height="99" fill="none" stroke="#b73445" stroke-width="2.2"/><line x1="0" y1="23" x2="170" y2="23" stroke="#b73445" stroke-width="1.4"/><line x1="0" y1="41" x2="170" y2="41" stroke="#b73445" stroke-width="1.4"/><line x1="0" y1="61" x2="170" y2="61" stroke="#b73445" stroke-width="1.4"/><line x1="0" y1="79" x2="170" y2="79" stroke="#b73445" stroke-width="1.4"/><text x="14" y="19" font-size="15" letter-spacing="0.8" opacity="0.9">重庆市施工图审查</text><text x="3" y="37" font-size="14" letter-spacing="0" opacity="0.9">机构名称:</text><text x="60" y="37" font-size="11" letter-spacing="-0.5" opacity="0.9">重庆瑞陵建筑</text><text x="4" y="56" font-size="14.5" letter-spacing="0.3" opacity="0.9">证书编号:31114-</text><text x="4" y="75" font-size="13.5" letter-spacing="0" opacity="0.9">有效期至:2027年12</text><text x="14" y="94" font-size="14" letter-spacing="0.5" opacity="0.9">重庆市住房和城乡建设</text></g><g transform="translate(1340 278) rotate(12)" font-family="Liberation Serif" fill="#b73445"><rect x="0" y="0" width="120" height="80" fill="none" stroke="#b73445" stroke-width="3"/><line x1="0" y1="17" x2="120" y2="17" stroke="#b73445" stroke-width="1.4"/><line x1="0" y1="33" x2="120" y2="33" stroke="#b73445" stroke-width="1.4"/><line x1="0" y1="49.5" x2="120" y2="49.5" stroke="#b73445" stroke-width="1.4"/><line x1="0" y1="64.5" x2="120" y2="64.5" stroke="#b73445" stroke-width="1.4"/><text x="28" y="14" font-size="12" letter-spacing="2" opacity="0.9">重庆市</text><text x="4" y="30" font-size="12.5" letter-spacing="0" opacity="0.9">姓　名:</text><text x="4" y="46" font-size="12.5" letter-spacing="0" opacity="0.9">编　号:</text><text x="4" y="62" font-size="12.5" letter-spacing="0" opacity="0.9">有效期:</text><text x="40" y="77" font-size="12" letter-spacing="2" opacity="0.9">重庆</text></g><g transform="translate(1307 397) rotate(5)" font-family="Liberation Serif" fill="#b73445"><rect x="0" y="0" width="130" height="103" fill="none" stroke="#b73445" stroke-width="2.4"/><line x1="0" y1="24" x2="130" y2="24" stroke="#b73445" stroke-width="1.4"/><line x1="0" y1="78" x2="130" y2="78" stroke="#b73445" stroke-width="1.4"/><text x="6" y="20" font-size="17" letter-spacing="1" opacity="0.9">四川省建设</text><text x="14" y="46" font-size="15" letter-spacing="-1" opacity="0.9">中　述　设</text><text x="4" y="70" font-size="11.5" letter-spacing="0" opacity="0.9">资质等级范围:公路</text><text x="4" y="97" font-size="12" letter-spacing="0" opacity="0.9">资质证书编号:A15</text></g><g transform="translate(1291 569) rotate(5)" font-family="Liberation Serif" fill="#b73445"><rect x="0" y="0" width="120" height="81" fill="none" stroke="#b73445" stroke-width="2.4"/><line x1="0" y1="24" x2="120" y2="24" stroke="#b73445" stroke-width="1.4"/><text x="8" y="19" font-size="15.5" letter-spacing="0" opacity="0.9">中华人民共和国</text><text x="6" y="40" font-size="15" letter-spacing="0" opacity="0.9">姓　名:　傅</text><text x="6" y="58" font-size="12" letter-spacing="0.5" opacity="0.9">注册号:　5102</text><text x="6" y="76" font-size="12" letter-spacing="0.5" opacity="0.9">有效期:　至20</text></g><g fill="none" stroke="#b73445" stroke-width="2.4"><circle cx="1363.3" cy="754.6" r="59"/></g><defs><path id="arc1" d="M1326.3 756.6 A37 37 0 0 1 1400.3 752.6"/><path id="arc2" d="M1310.8 762 A53 53 0 0 0 1367.9 807.4"/></defs><text font-size="18" fill="#b73445" font-family="Liberation Serif" letter-spacing="1.5" opacity="0.85"><textPath href="#arc1">中述设计集团</textPath></text><text font-size="6" fill="#b73445" letter-spacing="2.6" opacity="0.85"><textPath href="#arc2">5115295022988</textPath></text><polygon points="1353.9,739.2 1364.3,749.1 1377.1,742.9 1370.9,755.7 1380.8,766.1 1366.6,764.1 1359.9,776.8 1357.3,762.7 1343.2,760.1 1355.9,753.4" fill="#b73445" opacity="0.85"/></g></svg></div></div>

<!-- V SCROLLBAR -->
<div class="a" style="left:1637px;top:95px;width:17px;height:913px;background:#f0f0f0" id="vscroll"></div>

<!-- STATUS BAR -->
<div class="a" style="left:314px;top:990px;width:1323px;height:18px;background:#efefef" id="status"></div>

<!-- RIGHT PANEL -->
<div class="a" style="left:1654px;top:95px;width:251px;height:913px;background:#fafafa;border-left:1px solid #d0d0d0" id="rightpanel"></div>

<!-- menu texts -->
<div class="a" style="left:0;top:0;width:1905px;height:11px;overflow:hidden;font-size:12.5px;color:#333">
<span class="t" style="left:0;top:-8px">文件(F)</span>
<span class="t" style="left:52px;top:-8px">编辑(E)</span>
<span class="t" style="left:105px;top:-8px">视图(V)</span>
<span class="t" style="left:159px;top:-8px">签名(S)</span>
<span class="t" style="left:212px;top:-8px">PitStop Pro</span>
<span class="t" style="left:291px;top:-8px">增效工具(P)</span>
<span class="t" style="left:368px;top:-8px">窗口(W)</span>
<span class="t" style="left:426px;top:-8px">PitStop Pro 仪表板</span>
<span class="t" style="left:545px;top:-8px">帮助(H)</span>
<span class="t" style="left:600px;top:-8px">PDFShake</span>
<span class="t" style="left:671px;top:-8px">PDF工具箱</span>
<span class="t" style="left:743px;top:-8px">PLDA</span>
</div>
<!-- tabs -->
<div class="a" style="left:130px;top:12px;width:1px;height:35px;background:#d2d2d2"></div>
<div class="a" style="left:310px;top:12px;width:181px;height:36px;background:#f9f9f9;border-left:1px solid #d2d2d2;border-right:1px solid #d2d2d2"></div>
<span class="t" style="left:9px;top:18px;font-size:17px;color:#333">主页</span>
<span class="t" style="left:70px;top:18px;font-size:17px;color:#333">工具</span>
<span class="t" style="left:181px;top:22px;font-size:14px;color:#333">图纸扫描.pdf</span>
<span class="t" style="left:339px;top:22px;font-size:14px;color:#333">页面提取自 - 图纸...</span>
<svg class="a" style="left:472px;top:24px" width="10" height="10"><path d="M1.5 1.5L8.5 8.5M8.5 1.5L1.5 8.5" stroke="#555" stroke-width="1.8"/></svg>
<!-- right of tab bar -->
<svg class="a" style="left:1760px;top:18px" width="24" height="24"><circle cx="11.5" cy="11.5" r="9.5" fill="none" stroke="#555" stroke-width="1.8"/><text x="11.5" y="16.5" font-size="13" font-weight="bold" text-anchor="middle" fill="#555" font-family="Liberation Sans">?</text></svg>
<svg class="a" style="left:1801px;top:18px" width="22" height="24"><path d="M11 2.5c-4 0-6 3-6 6.5v5.5l-2.5 3h17l-2.5-3V9c0-3.5-2-6.5-6-6.5z" fill="#a6a6a6"/><path d="M8.5 19.5h5l-2.5 2.5z" fill="#a6a6a6"/></svg>
<span class="t" style="left:1852px;top:18px;font-size:17px;color:#333">登录</span>

<!-- toolbar icons -->
<svg class="a" style="left:0;top:47px" width="1905" height="48" fill="none" stroke="#6b6b6b" stroke-width="2" font-family="Liberation Sans">
 <!-- save -->
 <path d="M9 15h15l4 4v16H9z" stroke-linejoin="round"/><path d="M13 15v6h8v-6M12 35v-7h13v7" /><rect x="13" y="29" width="11" height="5" fill="#ddd" stroke="none"/>
 <!-- star -->
 <path d="M62 14l3.3 7 7.5.9-5.6 5.1 1.5 7.5L62 30.8 55.3 34.5l1.5-7.5L51.2 21.9l7.5-.9z" stroke-linejoin="round"/>
 <!-- cloud upload -->
 <path d="M100 30h-3a5 5 0 0 1 0-10 7 7 0 0 1 13.5-1.5A5.5 5.5 0 0 1 115 30h-3" stroke-linecap="round"/><path d="M106 37V24M101.5 28.5L106 24l4.5 4.5" stroke-linecap="round"/>
 <!-- printer -->
 <rect x="142" y="14" width="14" height="7" fill="none"/><path d="M139 22h20a1 1 0 0 1 1 1v9h-4v-4h-14v4h-4v-9a1 1 0 0 1 1-1z" fill="#6b6b6b"/><rect x="143" y="28" width="12" height="8" fill="none"/><path d="M146 31h6M146 34h6" stroke-width="1"/>
 <!-- search -->
 <circle cx="192" cy="23" r="8" /><path d="M198 29l6 6" stroke-width="2.6" stroke-linecap="round"/><path d="M188.5 23h1M191.5 23h1M194.5 23h1" stroke-width="1.6"/>
 <!-- up circle (disabled) -->
 <circle cx="277" cy="24" r="10" stroke="#bdbdbd"/><path d="M277 30V18M272.5 22.5L277 18l4.5 4.5" stroke="#bdbdbd" stroke-linecap="round"/>
 <!-- down circle -->
 <circle cx="321" cy="24" r="10"/><path d="M321 18v12M316.5 25.5L321 30l4.5-4.5" stroke-linecap="round"/>
 <line x1="353" y1="37.5" x2="380" y2="37.5" stroke="#cfcfcf" stroke-width="1"/>
 <text x="366" y="29" font-size="13" fill="#444" stroke="none" text-anchor="middle">1</text>
 <text x="385" y="29" font-size="13" fill="#444" stroke="none">/ 2</text>
 <!-- rotate cw -->
 <path d="M424.6 31.5A9 9 0 1 1 435.5 30" stroke-width="2.6"/><path d="M432.5 29.5l7-2.5-0.5 7.5z" fill="#6b6b6b" stroke="none"/>
 <!-- rotate ccw -->
 <path d="M479.4 31.5A9 9 0 1 0 468.5 30" stroke-width="2.6"/><path d="M471.5 29.5l-7-2.5 0.5 7.5z" fill="#6b6b6b" stroke="none"/>
 <!-- scroll icon -->
 <path d="M511 13v6h16v-6M511 35v-12h10l6 5v7M521 23v5h6"/>
 <!-- blue page -->
 <path d="M555 14h10l6 6v15h-16z M565 14v6h6" stroke="#1a6fd0" stroke-linejoin="round"/>
 <!-- double scroll -->
 <path d="M595 13v5h8v-5M606 13v5h10v-5M595 35v-12h6l3 3v9M606 35v-12h6l4 4v8"/>
 <!-- two pages -->
 <path d="M639 15h6l3 3v15h-9z M652 15h6l3 3v15h-9z" stroke-linejoin="round"/>
 <!-- monitor -->
 <rect x="683.5" y="15" width="21" height="14" rx="1"/><path d="M686 28L703 17v11z" fill="#ddd" stroke="none"/><path d="M690 33h8" stroke-width="2"/>
 <!-- lines blue -->
 <g stroke="#1a6fd0"><path d="M727 15.5h21" stroke-dasharray="3 2" stroke-width="1.2"/><path d="M727 19.5h21" stroke-width="1.2"/><path d="M727 24h21" stroke-width="2"/><path d="M728 29.5h19" stroke-width="3.6" stroke-linecap="round"/></g>
 <line x1="770.5" y1="8" x2="770.5" y2="38" stroke="#d0d0d0" stroke-width="1"/>
 <!-- arrow -->
 <path d="M798 14v16l4-3.5 3 7 2.5-1-3-6.5h5.5z" fill="#1a6fd0" stroke="none"/>
 <!-- hand -->
 <path d="M840 24v-6a1.6 1.6 0 0 1 3.2 0v4-7a1.6 1.6 0 0 1 3.2 0v7-8a1.6 1.6 0 0 1 3.2 0v8-6.5a1.6 1.6 0 0 1 3.2 0V28c0 4-3 7-7 7-3 0-4.5-1.5-6-3.5l-3.5-5a1.6 1.6 0 0 1 2.6-1.8z" stroke-width="1.6" stroke-linejoin="round"/>
 <!-- minus -->
 <circle cx="890.8" cy="23.6" r="9.8"/><path d="M886 23.6h9.6"/>
 <!-- plus -->
 <circle cx="934.7" cy="23.6" r="9.8"/><path d="M930 23.6h9.6M934.7 18.8v9.6"/>
 <text x="974" y="28.5" font-size="13.5" fill="#444" stroke="none">66.1%</text>
 <path d="M1022 21h8l-4 5z" fill="#666" stroke="none"/>
 <line x1="967" y1="37.5" x2="1037" y2="37.5" stroke="#cfcfcf" stroke-width="1"/>
 <!-- fit width -->
 <path d="M1061 12v5h17v-5M1061 36v-14h10l7 5v9M1071 22v5h7"/><path d="M1064 33h11M1064 33l2-2M1064 33l2 2M1075 33l-2-2M1075 33l-2 2" stroke-width="1.2"/>
 <!-- blue page arrows -->
 <g stroke="#1a6fd0"><path d="M1106 13.5h10l6.5 6.5v14.5h-16.5z M1116 13.5v6h6.5" stroke-linejoin="round"/><path d="M1114 18v12M1108 24h12" stroke-width="1.3"/><path d="M1112 20l2-2 2 2M1112 28l2 2 2-2M1110 22l-2 2 2 2M1118 22l2 2-2 2" stroke-width="1.3"/></g>
 <!-- fullscreen -->
 <rect x="1149" y="13.5" width="18.5" height="20" stroke-width="2"/><path d="M1153 29.5l10-10M1163 19.5h-4.5M1163 19.5v4.5M1153 29.5h4.5M1153 29.5v-4.5" stroke-width="2"/>
 <!-- blue page arrows dd -->
 <g stroke="#1a6fd0"><path d="M1193.5 13.5h10l6.5 6.5v14.5h-16.5z M1203.5 13.5v6h6.5" stroke-linejoin="round"/><path d="M1201.5 18v12M1195.5 24h12" stroke-width="1.3"/><path d="M1199.5 20l2-2 2 2M1199.5 28l2 2 2-2M1197.5 22l-2 2 2 2M1205.5 22l2 2-2 2" stroke-width="1.3"/></g>
 <path d="M1216 21h7l-3.5 4z" fill="#1a6fd0" stroke="none"/>
 <!-- keyboard down -->
 <rect x="1248" y="15" width="21" height="7" rx="1"/><path d="M1252 18.5h1M1256 18.5h1M1260 18.5h1M1264 18.5h1" stroke-width="1.5"/><path d="M1258.5 23v12M1254.5 31l4 4 4-4"/>
 <line x1="1290.5" y1="8" x2="1290.5" y2="38" stroke="#d0d0d0" stroke-width="1"/>
 <!-- comment -->
 <path d="M1314 15h19v14h-9l-4 4v-4h-6z" stroke-linejoin="round"/><path d="M1318 20h11M1318 24h8" stroke-width="1.5"/>
 <!-- pen -->
 <path d="M1356 34l3-6 13-13 4 4-13 13z" stroke-linejoin="round"/><path d="M1356 35l4-2-2-2z" fill="#6b6b6b"/>
 <!-- partially visible icons -->
 <path d="M1403 25l6-7 3 2.5M1410 18.5l5 4-2 3" stroke-width="2"/><path d="M1414 20l3 2.5" stroke="#bbb" stroke-width="3"/>
 <rect x="1443" y="19.5" width="8" height="6" fill="#6b6b6b" stroke="none" rx="1"/><path d="M1447 18v-2h6l4 5v4" stroke-width="2"/>
 <path d="M1490 26v-11h9l4 4v7" stroke="#d0d0d0" stroke-width="2"/><path d="M1495 25l1.5-2 1.5 2" stroke="#ccc" stroke-width="1"/>
 <rect x="1533" y="17.5" width="19" height="8" fill="#9a8e84" stroke="none"/><rect x="1535.5" y="15" width="5" height="4" fill="#f0e0b0" stroke="#7a6a5a" stroke-width="1"/><rect x="1544.5" y="15" width="5" height="4" fill="#f0e0b0" stroke="#7a6a5a" stroke-width="1"/>
 <text x="1575" y="30" font-size="18" fill="#0a1ac8" stroke="none" font-weight="bold" font-family="Liberation Serif">OI</text><text x="1592.5" y="21" font-size="11" fill="#0a1ac8" stroke="none" font-weight="bold">±</text>
 <path d="M1601 21.5h7l-3.5 1.5z" fill="#666" stroke="none"/>
 <path d="M1789 26l4-4a3 3 0 0 1 5 4l-4 4M1800 20l4-4a3 3 0 0 0-4-4" stroke-linecap="round"/>
 <!-- mail -->
 <rect x="1831" y="15" width="22" height="16"/><path d="M1831 15l11 9 11-9M1831 31l8-7M1853 31l-8-7" stroke-width="1.5"/>
 <!-- person add -->
 <circle cx="1880" cy="18" r="5" fill="#6b6b6b" stroke="none"/><path d="M1872 33c0-6 3-9 8-9s7 2 8 5v4z" fill="#6b6b6b" stroke="none"/><circle cx="1891" cy="30" r="6" fill="#6b6b6b" stroke="#f9f9f9" stroke-width="1.5"/><path d="M1888 30h6M1891 27v6" stroke="#fff" stroke-width="1.6"/>
</svg>

<!-- left icon column -->
<svg class="a" style="left:0;top:95px" width="38" height="200" fill="none" stroke="#6b6b6b" stroke-width="2">
 <path d="M37.5 22.5L30.5 30.5L37.5 38.5" stroke="#d8d8d8" stroke-width="1" fill="#fafafa"/>
 <g stroke="#1a6fd0" stroke-linejoin="round"><path d="M12 25v-3h8l5 5v12h-3"/><path d="M12 25h-4v18h14v-4"/><path d="M12 25v14h10" /></g>
 <path d="M9 69h13v22l-6.5-6-6.5 6z" stroke-linejoin="round"/>
 <path d="M17 118l-7 7a3.5 3.5 0 0 0 5 5l9-9a2.2 2.2 0 0 0-3-3l-8 8" stroke-linecap="round" stroke-width="2.2"/>
 <path d="M8 163h10l5 5v15H8z" stroke-linejoin="round"/><path d="M11.5 171h6M11.5 175h8M11.5 179h8" stroke-width="1.6"/>
</svg>
<span class="t" style="left:54px;top:104px;font-size:16px;color:#333">页面缩略图</span>
<svg class="a" style="left:259px;top:106px" width="16" height="16"><path d="M2.5 2.5L13.5 13.5M13.5 2.5L2.5 13.5" stroke="#555" stroke-width="2.2"/></svg>
<div class="a" style="left:53px;top:135px;width:229px;height:1px;background:#d5d5d5"></div>
<div class="a" style="left:53px;top:179px;width:229px;height:1px;background:#d5d5d5"></div>
<div class="a" style="left:96px;top:143px;width:1px;height:28px;background:#dadada"></div>
<svg class="a" style="left:50px;top:140px" width="200" height="36" fill="none" stroke="#6b6b6b" stroke-width="2">
 <rect x="5" y="10" width="18" height="15"/><circle cx="9.5" cy="14.5" r="1.5" fill="#6b6b6b" stroke="none"/><circle cx="9.5" cy="20.5" r="1.5" fill="#6b6b6b" stroke="none"/><path d="M13 14.5h7M13 20.5h7" stroke-width="1.8"/>
 <path d="M29 16h7l-3.5 4z" fill="#6b6b6b" stroke="none"/>
 <g stroke="#b9b9b9"><path d="M65 9.5h19M71 9.5v-2.5h7v2.5M67 12l1.5 16h12l1.5-16M72 14v12M75 14v12M78 14v12" stroke-width="1.8"/></g>
 <path d="M100 6v5h16V6M100 30V19h10l6 5v6M110 19v5h6M100 15h16" stroke-width="1.8"/>
 <path d="M100 15h16" stroke="#fafafa" stroke-dasharray="1 1.5" stroke-width="2"/>
 <g stroke="#b9b9b9" stroke-width="2.2"><path d="M135 26a8 8 0 1 1 13 0" stroke-linecap="round"/><path d="M131.5 23.5l4 5 4-3z" fill="#b9b9b9" stroke-width="1"/>
 <path d="M183 26a8 8 0 1 0-13 0" stroke-linecap="round"/><path d="M186.5 23.5l-4 5-4-3z" fill="#b9b9b9" stroke-width="1"/></g>
</svg>
<!-- thumb 1 -->
<div class="a" style="left:97px;top:210px;width:136px;height:102px;background:#abcaf6;box-shadow:1px 1px 2px rgba(0,0,0,.35);overflow:hidden">
<svg width="136" height="102"><use href="#bpg" transform="scale(0.1141) translate(-378 -96)"/></svg>
</div>
<div class="a" style="left:229px;top:307px;width:6px;height:6px;background:#222"></div>
<span class="t" style="left:161px;top:318px;font-size:12px;color:#333">1</span>
<!-- thumb 2 -->
<div class="a" style="left:97px;top:362px;width:136px;height:100px;background:#abcaf6;box-shadow:1px 1px 2px rgba(0,0,0,.35);overflow:hidden">
<svg width="136" height="100" fill="none" stroke="#3d66b8" stroke-width="0.6">
 <rect x="7.5" y="7.5" width="122" height="86" /><rect x="13.5" y="8.5" width="115" height="83" stroke-width="0.9"/>
 <path d="M7.5 53h6M7.5 30h6"/>
 <path d="M13.5 83h115M47 83v8.5M69 83v8.5M96 83v8.5M117 83v8.5" stroke-width="0.8"/>
 <ellipse cx="21" cy="87" rx="5" ry="3" fill="#1a3fb0" stroke="none"/>
 <path d="M60 10h16" stroke-width="1.6"/>
 <g stroke="#3f62b8" stroke-width="0.75" opacity=".75">
 <path d="M20 15h15M22 18h20M22 21h25M22 24h30M22 27h35M22 30h28M22 33h40M22 36h30M22 39h40M22 42h25M22 45h35M22 48h20M22 51h40M22 54h30M20 58h10M22 61h25M22 64h12M22 67h15M22 71h12M22 74h15"/>
 <path d="M80 15h20M80 18h25M80 21h35M80 24h30M80 27h40M80 30h28M80 33h35M80 36h30M80 39h40M80 42h25M80 45h32M80 48h20M80 51h40M80 54h30M80 57h35M80 60h25M80 63h30M80 67h28M80 70h35M80 73h30"/>
 </g>
 <path d="M76 12v66" stroke-width="0.5"/>
 <g stroke="#c0505a" stroke-width="0.8"><rect x="103" y="11" width="22" height="12" transform="rotate(9 103 11)"/><rect x="106" y="27" width="20" height="11" transform="rotate(12 106 27)"/><rect x="104" y="42" width="22" height="12" transform="rotate(6 104 42)"/><rect x="101" y="59" width="20" height="11" transform="rotate(5 101 59)"/><circle cx="110" cy="73" r="6"/><path d="M106 15h14M107 18h12M108 31h12M109 34h10M106 46h14M106 49h12M103 62h14M103 65h10" transform="rotate(8 110 40)" stroke-width="0.6"/></g>
</svg>
</div>
<span class="t" style="left:161px;top:468px;font-size:12px;color:#333">2</span>
<!-- splitter triangle -->
<svg class="a" style="left:300px;top:545px" width="10" height="12"><path d="M8 1v10L2 6z" fill="#555"/></svg>
<!-- status -->
<div class="a" style="left:314px;top:990px;width:147px;height:18px;background:#e2e2e2"></div>
<span class="t" style="left:334px;top:991px;font-size:12px;letter-spacing:-0.35px;color:#222">41.668 x 31.288 厘米</span>
<svg class="a" style="left:465px;top:993px" width="10" height="12"><path d="M7 2L3 6l4 4" stroke="#b0b0b0" stroke-width="1.5" fill="none"/></svg>

<!-- bottom right of doc area -->
<div class="a" style="left:1570px;top:95px;width:3px;height:895px;background:#f4f4f4"></div>
<svg class="a" style="left:1639px;top:975px" width="14" height="12"><path d="M2.5 3.5l4.5 4.5 4.5-4.5" stroke="#444" stroke-width="2" fill="none"/></svg>
<div class="a" style="left:1637px;top:990px;width:17px;height:18px;background:#fafafa"></div>
<svg class="a" style="left:1624px;top:993px" width="10" height="12"><path d="M3 2l4 4-4 4" stroke="#b8b8b8" stroke-width="1.5" fill="none"/></svg>
<div class="a" style="left:1654px;top:95px;width:1px;height:913px;background:#d3d3d3"></div>
<div class="a" style="left:1655px;top:95px;width:17px;height:913px;background:#f2f2f2"></div>
<div class="a" style="left:1672px;top:95px;width:1px;height:913px;background:#d3d3d3"></div>
<div class="a" style="left:1673px;top:95px;width:232px;height:913px;background:#fafafa"></div>
<div class="a" style="left:1810px;top:110px;width:88px;height:35px;background:#fff;border:1px solid #d3d3d3"></div>
<div class="a" style="left:1866px;top:298px;width:31px;height:14px;background:#2a72c6;border-radius:2px"></div>
<span class="t" style="left:1870px;top:298px;font-size:10.5px;line-height:14px;color:#fff">特色</span>
<div class="a" style="left:1800px;top:911px;width:98px;height:1px;background:#d8d8d8"></div>
<span class="t" style="left:1834px;top:931px;font-size:14px;font-weight:bold;color:#444">存储和共</span>
<span class="t" style="left:1772px;top:946px;font-size:14px;font-weight:bold;color:#444">享文件</span>

<!-- DIALOG -->
<svg width="0" height="0" style="position:absolute">
<defs>
<g id="gear8"><path d="M4.63 -0.83 L4.63 0.83 L3.31 0.79 L2.90 1.78 L3.86 2.69 L2.69 3.86 L1.78 2.90 L0.79 3.31 L0.83 4.63 L-0.83 4.63 L-0.79 3.31 L-1.78 2.90 L-2.69 3.86 L-3.86 2.69 L-2.90 1.78 L-3.31 0.79 L-4.63 0.83 L-4.63 -0.83 L-3.31 -0.79 L-2.90 -1.78 L-3.86 -2.69 L-2.69 -3.86 L-1.78 -2.90 L-0.79 -3.31 L-0.83 -4.63 L0.83 -4.63 L0.79 -3.31 L1.78 -2.90 L2.69 -3.86 L3.86 -2.69 L2.90 -1.78 L3.31 -0.79Z"/></g>
<symbol id="fold" viewBox="0 0 16 16"><path d="M.8 1.5h7l1 1.5h6.4v12.2H.8z" fill="#c2ae30" stroke="#9a8a20" stroke-width=".7"/><rect x="1.1" y="7.5" width="13.8" height="7.4" fill="#aaa840"/><g transform="translate(8 9) scale(.95)" fill="#9a7a2a"><use href="#gear8"/></g><circle cx="8" cy="9" r="2.6" fill="#d86a1a"/><circle cx="8" cy="8.6" r="1.1" fill="#f0d080"/></symbol><symbol id="foldl" viewBox="0 0 16 16"><use href="#fold"/><rect x="10" y="11" width="5.5" height="4.5" fill="#444"/><path d="M11 11v-1.5a1.7 1.7 0 0 1 3.4 0V11" stroke="#d8d030" stroke-width="1.2" fill="none"/></symbol>
<symbol id="foldb" viewBox="0 0 16 16"><path d="M.5 1.5h5l1 1.5h9v11.5H.5z" fill="#8fb4ea" stroke="#4a78c8" stroke-width=".8"/><path d="M.8 4h14.7v10.2H.8z" fill="#b9d2f5" stroke="#4a78c8" stroke-width=".6"/><g transform="translate(7.5 9)" fill="#333"><use href="#gear8"/></g><circle cx="7.5" cy="9" r="1.3" fill="#b9d2f5"/></symbol>
<symbol id="doc" viewBox="0 0 16 16"><path d="M4.5 .5h6.5l4 4v11h-10.5z" fill="#f2f2f2" stroke="#7a7a7a" stroke-width=".9"/><path d="M11 .5v4h4" fill="none" stroke="#7a7a7a" stroke-width=".9"/><g transform="translate(4.3 9) scale(.88)" fill="#3a3a3a"><use href="#gear8"/></g><circle cx="4.3" cy="9" r="1.2" fill="#f2f2f2"/></symbol>
</defs></svg>
<div class="a" style="left:1371px;top:70px;width:463px;height:880px;background:#f0f0f0;border-top:1px solid #6f6f6f;box-shadow:3px 3px 14px rgba(0,0,0,.35),0 0 3px rgba(0,0,0,.2)"></div>
<div class="a" style="left:1371px;top:71px;width:463px;height:30px;background:#ffffff"></div>
<span class="t" style="left:1379px;top:77px;font-size:12px;color:#000;-webkit-text-stroke:0.2px #000">动作列表</span>
<div class="a" style="left:1814px;top:78px;width:19px;height:19px;background:#a3304f"></div>
<svg class="a" style="left:1820px;top:84px" width="8" height="8"><path d="M1.5 1.5L6.5 6.5M6.5 1.5L1.5 6.5" stroke="#fff" stroke-width="1.4"/></svg>
<div class="a" style="left:1383px;top:113px;width:29px;height:28px;background:#e1e1e1;border:1px solid #adadad"></div>
<div class="a" style="left:1420px;top:113px;width:29px;height:28px;background:#e1e1e1;border:1px solid #adadad"></div>
<div class="a" style="left:1457px;top:113px;width:29px;height:28px;background:#cce8ff;border:1.5px solid #0a64c8"></div>
<div class="a" style="left:1494px;top:113px;width:29px;height:28px;background:#e1e1e1;border:1px solid #adadad"></div>
<svg class="a" style="left:1383px;top:113px" width="140" height="28">
<path d="M8.5 14.5l4 4.5 7.5-8" stroke="#8a4f96" stroke-width="3.2" fill="none"/>
<circle cx="51.4" cy="14.3" r="6.6" fill="#8a3f88"/><path d="M50 10.5c2-1 4 0 4.5 1.5-1 .5-1.5 1.5-.5 2.5 1 1.5 1 3.5-.5 5-1-1-1.5-2.5-2.5-3-1.5-.5-2.5-2-2-3.5.5-1 1-2 1-3z" fill="#f4eef6"/><path d="M46 12c1-2 2-3 3-3" stroke="#c8a8d0" stroke-width="1" fill="none"/>
<g transform="translate(89.4 15.4) scale(1.38)" fill="#8a3f88"><use href="#gear8"/></g><circle cx="89.4" cy="15.4" r="2.1" fill="#cce8ff"/>
<g fill="#9a5aa0"><ellipse cx="120" cy="10" rx="5" ry="2.3" transform="rotate(20 120 10)"/><ellipse cx="129.5" cy="9.5" rx="5.2" ry="2.3" transform="rotate(-40 129.5 9.5)"/><ellipse cx="125.5" cy="17.5" rx="2.4" ry="4.8" transform="rotate(-10 125.5 17.5)"/><circle cx="124.9" cy="12.8" r="2.6"/></g><circle cx="124.9" cy="12.8" r="1" fill="#e1e1e1"/>
</svg>
<div class="a" style="left:1666px;top:116px;width:120px;height:20px;background:#fff;border:1px solid #8a8a8a;border-radius:10px"></div>
<svg class="a" style="left:1670px;top:118px" width="20" height="16"><circle cx="7" cy="7" r="4" fill="none" stroke="#666" stroke-width="1.8"/><path d="M10 10l3 3" stroke="#666" stroke-width="2"/><path d="M13.5 11h4l-2 2.5z" fill="#666"/></svg>
<span class="t" style="left:1692px;top:118px;font-size:12.5px;color:#8a8a8a">搜索</span>
<div class="a" style="left:1793px;top:115px;width:28px;height:22px;background:linear-gradient(#f6f6f6,#e6e6e6);border:1px solid #adadad"></div>
<svg class="a" style="left:1793px;top:115px" width="28" height="22"><g transform="translate(10.5 11) scale(1.05)" fill="#333"><use href="#gear8"/></g><circle cx="10.5" cy="11" r="1.4" fill="#eee"/><path d="M18 10h5l-2.5 3z" fill="#444"/></svg>
<div class="a" style="left:1382px;top:148px;width:441px;height:601px;background:#fff;border:1px solid #828790;overflow:hidden">
<svg class="a" style="left:23px;top:2px" width="16" height="16"><use href="#fold"/></svg>
<span class="t" style="left:45px;top:3px;font-size:12.2px;line-height:16px;color:#000;-webkit-text-stroke:0.25px #000">收藏夹</span>
<svg class="a" style="left:5px;top:25px" width="10" height="12"><path d="M3 2l4 4-4 4" stroke="#9a9a9a" stroke-width="1.5" fill="none"/></svg>
<svg class="a" style="left:23px;top:23px" width="16" height="16"><use href="#fold"/></svg>
<span class="t" style="left:45px;top:24px;font-size:12.2px;line-height:16px;color:#000;-webkit-text-stroke:0.25px #000">最新列表</span>
<svg class="a" style="left:5px;top:46px" width="10" height="12"><path d="M3 2l4 4-4 4" stroke="#9a9a9a" stroke-width="1.5" fill="none"/></svg>
<svg class="a" style="left:23px;top:44px" width="16" height="16"><use href="#foldl"/></svg>
<span class="t" style="left:45px;top:45px;font-size:12.2px;line-height:16px;color:#000;-webkit-text-stroke:0.25px #000">标准</span>
<svg class="a" style="left:4px;top:68px" width="12" height="10"><path d="M1.5 2.5l4.5 4.5 4.5-4.5" stroke="#333" stroke-width="1.6" fill="none"/></svg>
<svg class="a" style="left:23px;top:65px" width="16" height="16"><use href="#fold"/></svg>
<span class="t" style="left:45px;top:66px;font-size:12.2px;line-height:16px;color:#000;-webkit-text-stroke:0.25px #000">本地</span>
<svg class="a" style="left:24px;top:89px" width="12" height="10"><path d="M1.5 2.5l4.5 4.5 4.5-4.5" stroke="#333" stroke-width="1.6" fill="none"/></svg>
<svg class="a" style="left:43px;top:86px" width="16" height="16"><use href="#foldb"/></svg>
<span class="t" style="left:65px;top:87px;font-size:12.2px;line-height:16px;color:#000;-webkit-text-stroke:0.25px #000">宝哥动作组2026-04-08</span>
<svg class="a" style="left:45px;top:109px" width="10" height="12"><path d="M3 2l4 4-4 4" stroke="#9a9a9a" stroke-width="1.5" fill="none"/></svg>
<svg class="a" style="left:63px;top:107px" width="16" height="16"><use href="#foldb"/></svg>
<span class="t" style="left:85px;top:108px;font-size:12.2px;line-height:16px;color:#000;-webkit-text-stroke:0.25px #000">001 文本处理</span>
<svg class="a" style="left:44px;top:131px" width="12" height="10"><path d="M1.5 2.5l4.5 4.5 4.5-4.5" stroke="#333" stroke-width="1.6" fill="none"/></svg>
<svg class="a" style="left:63px;top:128px" width="16" height="16"><use href="#foldb"/></svg>
<span class="t" style="left:85px;top:129px;font-size:12.2px;line-height:16px;color:#000;-webkit-text-stroke:0.25px #000">002色彩转换</span>
<div class="a" style="left:80px;top:147px;width:342px;height:21px;background:#e5f3ff;"></div>
<svg class="a" style="left:83px;top:149px" width="16" height="16"><use href="#doc"/></svg>
<span class="t" style="left:105px;top:150px;font-size:12.2px;line-height:16px;color:#000;-webkit-text-stroke:0.25px #000">00&nbsp;&nbsp;浅色灰度加深</span>
<svg class="a" style="left:83px;top:170px" width="16" height="16"><use href="#doc"/></svg>
<span class="t" style="left:105px;top:171px;font-size:12.2px;line-height:16px;color:#000;-webkit-text-stroke:0.25px #000">01-1 一键全部转蓝※</span>
<svg class="a" style="left:83px;top:191px" width="16" height="16"><use href="#doc"/></svg>
<span class="t" style="left:105px;top:192px;font-size:12.2px;line-height:16px;color:#000;-webkit-text-stroke:0.25px #000">01-2 一键全部转蓝※（淡色加深)</span>
<svg class="a" style="left:83px;top:212px" width="16" height="16"><use href="#doc"/></svg>
<span class="t" style="left:105px;top:213px;font-size:12.2px;line-height:16px;color:#000;-webkit-text-stroke:0.25px #000">01-3 一键转蓝图红章 (保留矢量红色)</span>
<svg class="a" style="left:83px;top:233px" width="16" height="16"><use href="#doc"/></svg>
<span class="t" style="left:105px;top:234px;font-size:12.2px;line-height:16px;color:#000;-webkit-text-stroke:0.25px #000">01-4 一键转蓝图红章 (矢量红和图片不变)</span>
<svg class="a" style="left:83px;top:254px" width="16" height="16"><use href="#doc"/></svg>
<span class="t" style="left:105px;top:255px;font-size:12.2px;line-height:16px;color:#000;-webkit-text-stroke:0.25px #000">01-5 一键转蓝图红章 (图片不变)</span>
<svg class="a" style="left:83px;top:275px" width="16" height="16"><use href="#doc"/></svg>
<span class="t" style="left:105px;top:276px;font-size:12.2px;line-height:16px;color:#000;-webkit-text-stroke:0.25px #000">01-6 矩形框选转RGB100蓝色</span>
<svg class="a" style="left:83px;top:296px" width="16" height="16"><use href="#doc"/></svg>
<span class="t" style="left:105px;top:297px;font-size:12.2px;line-height:16px;color:#000;-webkit-text-stroke:0.25px #000">02-1 一键转蓝图RGB（ICC)</span>
<svg class="a" style="left:83px;top:317px" width="16" height="16"><use href="#doc"/></svg>
<span class="t" style="left:105px;top:318px;font-size:12.2px;line-height:16px;color:#000;-webkit-text-stroke:0.25px #000">02-2 一键转蓝留红RGB（弱ICC)</span>
<svg class="a" style="left:83px;top:338px" width="16" height="16"><use href="#doc"/></svg>
<span class="t" style="left:105px;top:339px;font-size:12.2px;line-height:16px;color:#000;-webkit-text-stroke:0.25px #000">02-3 一键转蓝留红RGB（中ICC)</span>
<svg class="a" style="left:83px;top:359px" width="16" height="16"><use href="#doc"/></svg>
<span class="t" style="left:105px;top:360px;font-size:12.2px;line-height:16px;color:#000;-webkit-text-stroke:0.25px #000">02-4 一键转蓝留红RGB（强ICC)</span>
<svg class="a" style="left:83px;top:380px" width="16" height="16"><use href="#doc"/></svg>
<span class="t" style="left:105px;top:381px;font-size:12.2px;line-height:16px;color:#000;-webkit-text-stroke:0.25px #000">02-5 一键转蓝留红RGB（ 普通 ）</span>
<svg class="a" style="left:83px;top:401px" width="16" height="16"><use href="#doc"/></svg>
<span class="t" style="left:105px;top:402px;font-size:12.2px;line-height:16px;color:#000;-webkit-text-stroke:0.25px #000">03 一键转黑白（灰度)</span>
<svg class="a" style="left:83px;top:422px" width="16" height="16"><use href="#doc"/></svg>
<span class="t" style="left:105px;top:423px;font-size:12.2px;line-height:16px;color:#000;-webkit-text-stroke:0.25px #000">04 一键变黑白（单黑)</span>
<svg class="a" style="left:83px;top:443px" width="16" height="16"><use href="#doc"/></svg>
<span class="t" style="left:105px;top:444px;font-size:12.2px;line-height:16px;color:#000;-webkit-text-stroke:0.25px #000">05-1 去除扫描蓝底色</span>
<div class="a" style="left:80px;top:462px;width:342px;height:21px;background:#cce8ff;outline:1px dotted #333;outline-offset:-1px"></div>
<svg class="a" style="left:83px;top:464px" width="16" height="16"><use href="#doc"/></svg>
<span class="t" style="left:105px;top:465px;font-size:12.2px;line-height:16px;color:#000;-webkit-text-stroke:0.25px #000">05-2 去除扫描蓝底色</span>
<svg class="a" style="left:83px;top:485px" width="16" height="16"><use href="#doc"/></svg>
<span class="t" style="left:105px;top:486px;font-size:12.2px;line-height:16px;color:#000;-webkit-text-stroke:0.25px #000">05-3 去除扫描蓝底色</span>
<svg class="a" style="left:83px;top:506px" width="16" height="16"><use href="#doc"/></svg>
<span class="t" style="left:105px;top:507px;font-size:12.2px;line-height:16px;color:#000;-webkit-text-stroke:0.25px #000">05-4 去除扫描蓝底色</span>
<svg class="a" style="left:83px;top:527px" width="16" height="16"><use href="#doc"/></svg>
<span class="t" style="left:105px;top:528px;font-size:12.2px;line-height:16px;color:#000;-webkit-text-stroke:0.25px #000">06 更改白底色颜色（CMYK)</span>
<svg class="a" style="left:83px;top:548px" width="16" height="16"><use href="#doc"/></svg>
<span class="t" style="left:105px;top:549px;font-size:12.2px;line-height:16px;color:#000;-webkit-text-stroke:0.25px #000">07 移除背景色并改白字为黑色（图片不变)</span>
<svg class="a" style="left:83px;top:569px" width="16" height="16"><use href="#doc"/></svg>
<span class="t" style="left:105px;top:570px;font-size:12.2px;line-height:16px;color:#000;-webkit-text-stroke:0.25px #000">08 移除背景色改所有字为黑色（图片不变)</span>
<svg class="a" style="left:83px;top:590px" width="16" height="16"><use href="#doc"/></svg>
<span class="t" style="left:105px;top:591px;font-size:12.2px;line-height:16px;color:#000;-webkit-text-stroke:0.25px #000">09 将色彩转换为CNYK</span>
<div class="a" style="left:422px;top:0;width:17px;height:599px;background:#f0f0f0"></div>
<div class="a" style="left:423px;top:17px;width:15px;height:165px;background:#cdcdcd"></div>
<svg class="a" style="left:422px;top:2px" width="17" height="14"><path d="M4.5 9l4-4 4 4" stroke="#606060" stroke-width="1.6" fill="none"/></svg>
<svg class="a" style="left:422px;top:583px" width="17" height="14"><path d="M4.5 5l4 4 4-4" stroke="#606060" stroke-width="1.6" fill="none"/></svg>
</div>
<span class="t" style="left:1382px;top:753px;font-size:12.5px;color:#000;-webkit-text-stroke:0.2px #000">运行范围:</span>
<div class="a" style="left:1382px;top:773px;width:74px;height:20px;background:#e1e1e1;border:1px solid #adadad"></div>
<span class="t" style="left:1386px;top:775px;font-size:12px;color:#000;-webkit-text-stroke:0.2px #000">整篇文档</span>
<svg class="a" style="left:1442px;top:779px" width="10" height="8"><path d="M1 1.5l4 4 4-4" stroke="#333" stroke-width="1.2" fill="none"/></svg>
<div class="a" style="left:1397px;top:799px;width:74px;height:20px;background:#e1e1e1;border:1px solid #adadad"></div>
<span class="t" style="left:1401px;top:801px;font-size:12px;color:#000;-webkit-text-stroke:0.2px #000">所有页面</span>
<svg class="a" style="left:1457px;top:805px" width="10" height="8"><path d="M1 1.5l4 4 4-4" stroke="#333" stroke-width="1.2" fill="none"/></svg>
<div class="a" style="left:1397px;top:827px;width:13px;height:13px;border-radius:50%;background:#fff;border:1px solid #c8c8c8"></div>
<div class="a" style="left:1397px;top:852px;width:13px;height:13px;border-radius:50%;background:#fff;border:1px solid #c8c8c8"></div>
<div class="a" style="left:1416px;top:825px;width:92px;height:18px;background:#f0f0f0;border:1px solid #cccccc"></div>
<div class="a" style="left:1492px;top:826px;width:14px;height:16px;border-left:1px solid #dcdcdc;border-top:1px solid #e6e6e6"></div>
<svg class="a" style="left:1494px;top:827px" width="10" height="14"><path d="M2 5l3-3 3 3z M2 9l3 3 3-3z" fill="#555"/></svg>
<span class="t" style="left:1419px;top:826px;font-size:12.5px;color:#8a8a8a">2</span>
<span class="t" style="left:1514px;top:826px;font-size:12px;color:#6d6d6d">页（从当前页开始）</span>
<div class="a" style="left:1416px;top:850px;width:133px;height:19px;background:#f0f0f0;border:1px solid #cccccc;box-shadow:inset 0 0 0 1px #fff"></div>
<span class="t" style="left:1419px;top:851px;font-size:12.5px;color:#8a8a8a">3</span>
<span class="t" style="left:1557px;top:851px;font-size:12px;color:#6d6d6d">（例如：1-10, 15, 20-）</span>
<span class="t" style="left:1382px;top:873px;font-size:12.5px;color:#000;-webkit-text-stroke:0.2px #000">显示结果</span>
<div class="a" style="left:1382px;top:893px;width:194px;height:20px;background:#e1e1e1;border:1px solid #adadad"></div>
<span class="t" style="left:1386px;top:895px;font-size:12px;color:#000;-webkit-text-stroke:0.2px #000">从不</span>
<svg class="a" style="left:1562px;top:899px" width="10" height="8"><path d="M1 1.5l4 4 4-4" stroke="#333" stroke-width="1.2" fill="none"/></svg>
<div class="a" style="left:1777px;top:876px;width:45px;height:44px;background:#e1e1e1;border:1px solid #adadad"></div>
<svg class="a" style="left:1777px;top:876px" width="45" height="44"><path d="M12 10.5L34 22 12 33.5z" fill="#c0b028" stroke="#5a5010" stroke-width="1"/><path d="M12 10.5L34 22H12z" fill="#d0c040" opacity=".6"/></svg>
<span class="t" style="left:1786px;top:925px;font-size:12.5px;color:#111">运行</span>
<svg class="a" style="left:1820px;top:936px" width="12" height="12"><g fill="#bdbdbd"><rect x="8" y="2" width="2" height="2"/><rect x="5" y="5" width="2" height="2"/><rect x="8" y="5" width="2" height="2"/><rect x="2" y="8" width="2" height="2"/><rect x="5" y="8" width="2" height="2"/><rect x="8" y="8" width="2" height="2"/></g></svg>
<svg class="a" style="left:1719px;top:404px" width="16" height="24"><path d="M1.5 1.5v17l4-4 3 7 2.5-1-3-7h5.5z" fill="#fff" stroke="#000" stroke-width="1"/></svg>

<!-- TASKBAR -->
<div class="a" style="left:0;top:1008px;width:1905px;height:7px;background:#d4e2ec" id="taskbar"></div>
<!-- IME bar -->
<div class="a" style="left:1659px;top:965px;width:256px;height:30px;background:#fff;border-radius:9px;box-shadow:0 1px 4px rgba(0,0,0,.25)"></div>
<svg class="a" style="left:1659px;top:965px" width="246" height="30">
 <path d="M24 9.5c-3-1.5-9-1-9.5 2.5-.4 3 6 2.5 6.5 5 .5 3-6 3.5-10 2" stroke="#c9700f" stroke-width="3.6" fill="none" stroke-linecap="round"/>
 <line x1="36.5" y1="7" x2="36.5" y2="24" stroke="#ccc" stroke-width="1"/>
 <text x="46" y="21" font-size="15" font-weight="bold" fill="#111" font-family="Liberation Sans">英</text>
 <circle cx="79" cy="12" r="1.8" fill="#111"/><path d="M84 17.5c1 0 1.5 1 .5 3l-1.5 1.5" stroke="#111" stroke-width="2.2" fill="none" stroke-linecap="round"/>
 <rect x="105" y="7" width="6" height="11" rx="3" stroke="#111" stroke-width="1.8" fill="none"/><path d="M102.5 14a5.5 5.5 0 0 0 11 0M108 19.5v3.5" stroke="#111" stroke-width="1.8" fill="none"/>
 <rect x="134" y="8.5" width="15.5" height="13" rx="1.5" stroke="#111" stroke-width="1.8" fill="none"/><path d="M137.5 12.5h1M140.5 12.5h1M143.5 12.5h1M146 12.5h.5M137.5 15.5h1M140.5 15.5h1M143.5 15.5h1M138 18.5h8" stroke="#111" stroke-width="1.3"/>
 <path d="M165 12l5-3h5l5 3-2 3h-2v7h-7v-7h-2z" fill="#8a7ad8"/><circle cx="181" cy="7" r="2.5" fill="#f09030"/><path d="M166 11.5l3-1.5 1 3z" fill="#f0a040"/>
 <rect x="196" y="8" width="5.5" height="5.5" rx="1" stroke="#111" stroke-width="1.8" fill="none"/><rect x="205" y="8" width="5.5" height="5.5" rx="1" stroke="#111" stroke-width="1.8" fill="none"/><rect x="196" y="17" width="5.5" height="5.5" rx="1" stroke="#111" stroke-width="1.8" fill="none"/><rect x="205" y="17" width="5.5" height="5.5" rx="1" stroke="#111" stroke-width="1.8" fill="none"/>
 <circle cx="236" cy="15.5" r="10" fill="#f4f4f4" stroke="#e0e0e0"/><path d="M228 14c3-3 9-4 14-2l-2 4c-4 1-8 1-12 0z" fill="#d8882a"/><circle cx="233" cy="14" r="1" fill="#333"/><path d="M243 8l1 2 2 1-2 1-1 2-1-2-2-1 2-1z" fill="#f0b030"/>
</svg>
<!-- taskbar items -->
<span class="t" style="left:1822px;top:1010px;font-size:12px;font-weight:bold;color:#111;line-height:14px">11:19 11</span>
<div class="a" style="left:8px;top:1009px;width:18px;height:10px;border-radius:50%;background:#f0e0d8"></div>


</body></html>
